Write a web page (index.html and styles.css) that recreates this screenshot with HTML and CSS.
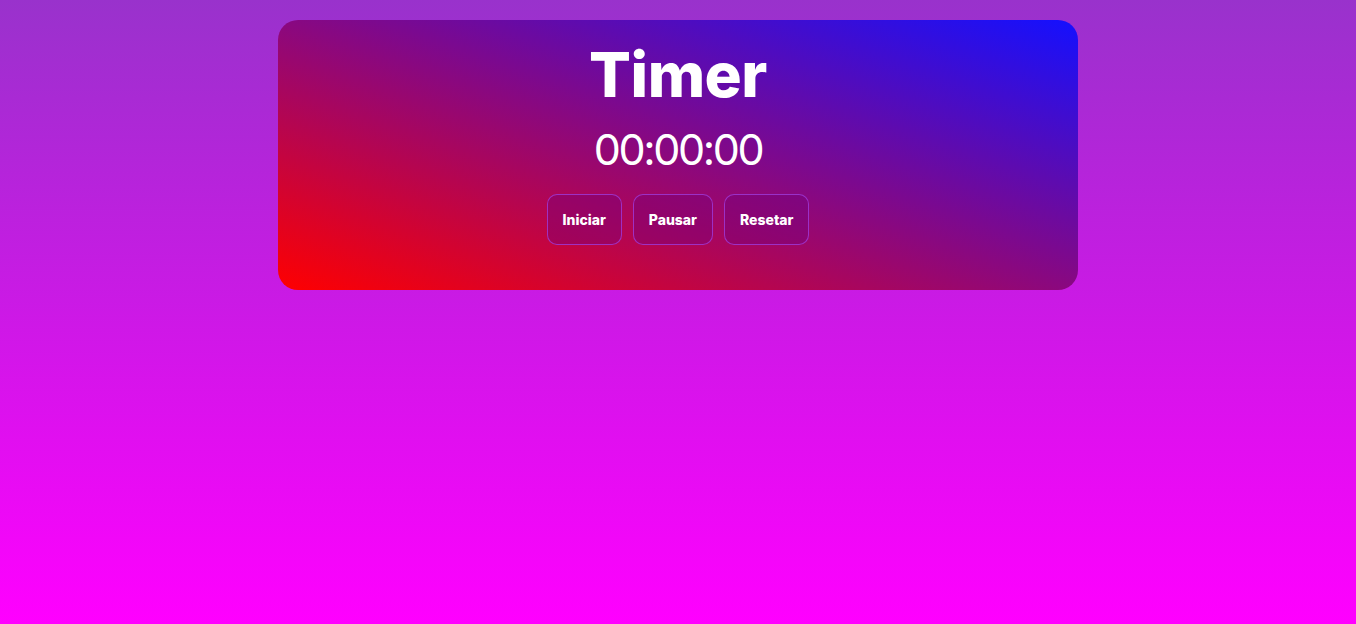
FILE: index.html
```html
<!DOCTYPE html>
<html lang="pt">
<head>
<meta charset="utf-8">
<title>Timer</title>
<link rel="stylesheet" href="styles.css">
</head>
<body>
<main class="card">
  <h1 class="title">Timer</h1>
  <div class="time">00:00:00</div>
  <div class="controls">
    <button class="btn">Iniciar</button>
    <button class="btn">Pausar</button>
    <button class="btn">Resetar</button>
  </div>
</main>
</body>
</html>
```
FILE: styles.css
```css
html, body {
  margin: 0;
  padding: 0;
  height: 100%;
}
body {
  background: linear-gradient(to bottom, #9932cc, #ff00ff);
  font-family: Inter, "Noto Sans", sans-serif;
  color: #fff;
  padding-top: 20px;
  box-sizing: border-box;
}
.card {
  width: 800px;
  margin: 0 auto;
  height: 270px;
  box-sizing: border-box;
  border-radius: 20px;
  background: linear-gradient(to top right, #ff0000, #1410ff);
  display: flex;
  flex-direction: column;
  align-items: center;
  padding-top: 20px;
}
.title {
  margin: 0;
  font-size: 62px;
  font-weight: 800;
  line-height: 70px;
  height: 70px;
  letter-spacing: -0.5px;
}
.time {
  margin-top: 14px;
  font-size: 43px;
  font-weight: 400;
  line-height: 50px;
  height: 50px;
  letter-spacing: -2.4px;
}
.controls {
  margin-top: 20px;
  display: flex;
  gap: 11px;
}
.btn {
  font-family: Inter, "Noto Sans", sans-serif;
  font-size: 14px;
  font-weight: 800;
  color: #fff;
  background: rgba(110, 0, 130, 0.35);
  border: 1px solid rgba(160, 60, 220, 0.8);
  border-radius: 10px;
  padding: 0 15px;
  height: 51px;
  line-height: 49px;
}
```
